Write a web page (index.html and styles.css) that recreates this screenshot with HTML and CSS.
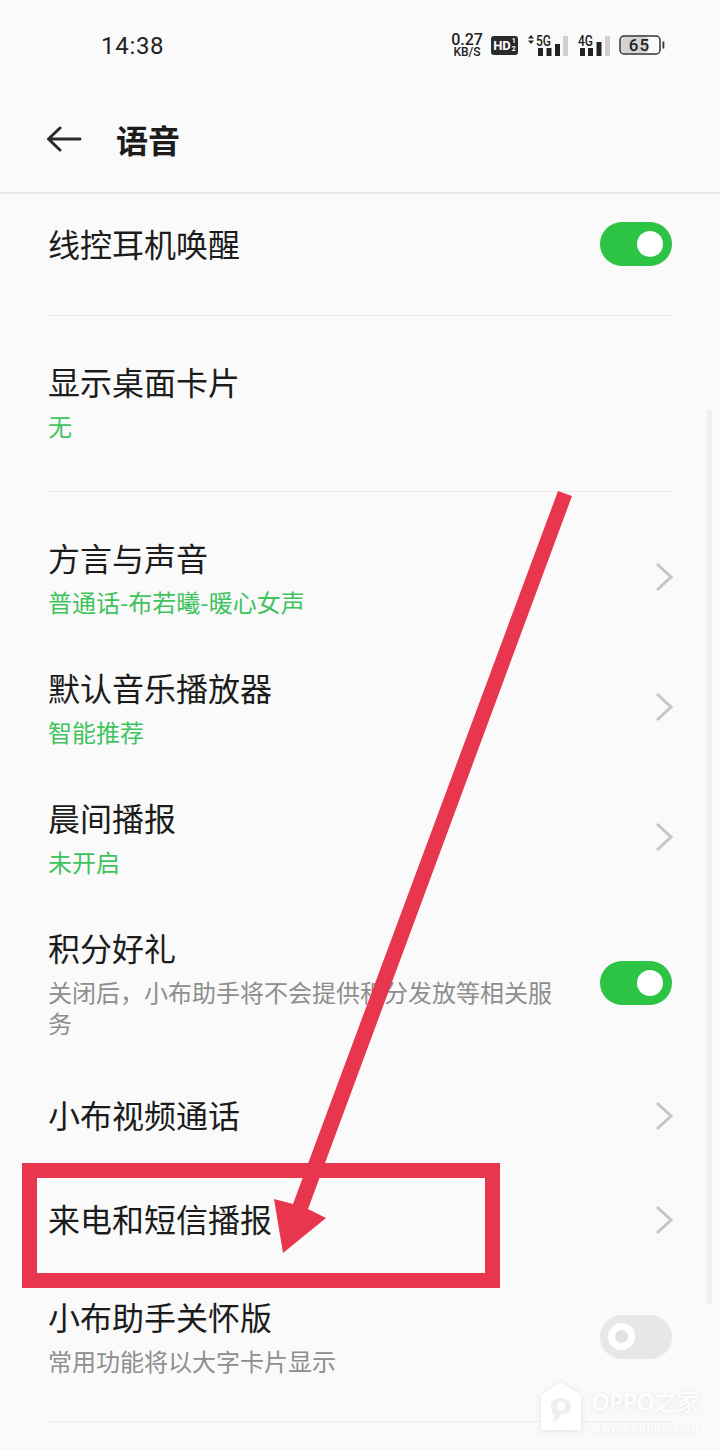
FILE: index.html
```html
<!DOCTYPE html>
<html lang="zh-CN">
<head>
<meta charset="utf-8">
<title>语音</title>
<link rel="stylesheet" href="styles.css">
</head>
<body>
<div class="screen">
  <div class="status">
    <span class="time">14:38</span>
    <div class="status-icons">
      <div class="speed"><span class="speed-num">0.27</span><span class="speed-unit">KB/S</span></div>
      <div class="hd"><span class="hd-text">HD</span><span class="hd-frac"><span>1</span><span>2</span></span></div>
      <svg class="sig5" width="42" height="24" viewBox="0 0 42 24">
        <path d="M4 2 7 5.500H1ZM4 11 1 7.500H7Z" fill="#222"/>
        <text x="9" y="13" class="sig-label" textLength="15" lengthAdjust="spacingAndGlyphs">5G</text>
        <rect x="11" y="15" width="5" height="8" fill="#222"/><rect x="19.500" y="15" width="5" height="8" fill="#222"/><rect x="28" y="11" width="5" height="12" fill="#222"/><rect x="36" y="3" width="5" height="20" fill="#cfcfcf"/>
      </svg>
      <svg class="sig4" width="32" height="24" viewBox="0 0 32 24">
        <text x="0" y="13" class="sig-label" textLength="15" lengthAdjust="spacingAndGlyphs">4G</text>
        <rect x="2" y="15" width="5" height="8" fill="#222"/><rect x="10" y="15" width="5" height="8" fill="#222"/><rect x="18.500" y="9" width="5" height="14" fill="#222"/><rect x="27" y="3" width="5" height="20" fill="#cfcfcf"/>
      </svg>
      <svg class="batt" width="46" height="20" viewBox="0 0 46 20">
        <rect x="2" y="2" width="27" height="16" rx="3" fill="#d4d4d4"/>
        <rect x="1" y="1" width="40" height="18" rx="4" fill="none" stroke="#333" stroke-width="1.500"/>
        <rect x="43.500" y="6.500" width="1.800" height="7" fill="#333"/>
        <text x="20.500" y="16" text-anchor="middle" class="batt-text">65</text>
      </svg>
    </div>
  </div>
  <header class="head">
    <svg class="back" width="36" height="26" viewBox="0 0 36 26"><path d="M34 13H3M14 2 2.500 13 14 24" fill="none" stroke="#2a2a2a" stroke-width="3" stroke-linecap="round" stroke-linejoin="round"/></svg>
    <h1 class="head-title">语音</h1>
  </header>

  <main class="list">
    <div class="row row-first divider">
      <div class="title">线控耳机唤醒</div>
      <span class="switch on"></span>
    </div>
    <div class="row row-second divider">
      <div><div class="title">显示桌面卡片</div><div class="sub green">无</div></div>
    </div>
    <div class="row row-sub row-after-rule">
      <div><div class="title">方言与声音</div><div class="sub green">普通话-布若曦-暖心女声</div></div>
      <svg class="chev" width="18" height="30" viewBox="0 0 18 30"><path d="M2 2 16 15 2 28" fill="none" stroke="#c6c6c6" stroke-width="3"/></svg>
    </div>
    <div class="row row-sub">
      <div><div class="title">默认音乐播放器</div><div class="sub green">智能推荐</div></div>
      <svg class="chev" width="18" height="30" viewBox="0 0 18 30"><path d="M2 2 16 15 2 28" fill="none" stroke="#c6c6c6" stroke-width="3"/></svg>
    </div>
    <div class="row row-sub">
      <div><div class="title">晨间播报</div><div class="sub green">未开启</div></div>
      <svg class="chev" width="18" height="30" viewBox="0 0 18 30"><path d="M2 2 16 15 2 28" fill="none" stroke="#c6c6c6" stroke-width="3"/></svg>
    </div>
    <div class="row row-sub">
      <div class="text-wrap"><div class="title">积分好礼</div><div class="sub grey">关闭后，小布助手将不会提供积分发放等相关服务</div></div>
      <span class="switch on"></span>
    </div>
    <div class="row row-plain">
      <div class="title">小布视频通话</div>
      <svg class="chev" width="18" height="30" viewBox="0 0 18 30"><path d="M2 2 16 15 2 28" fill="none" stroke="#c6c6c6" stroke-width="3"/></svg>
    </div>
    <div class="row row-plain">
      <div class="title">来电和短信播报</div>
      <svg class="chev" width="18" height="30" viewBox="0 0 18 30"><path d="M2 2 16 15 2 28" fill="none" stroke="#c6c6c6" stroke-width="3"/></svg>
    </div>
    <div class="row row-sub row-last divider">
      <div><div class="title">小布助手关怀版</div><div class="sub grey">常用功能将以大字卡片显示</div></div>
      <span class="switch off"></span>
    </div>
  </main>

  <div class="scrollbar"></div>

  <div class="watermark">
    <svg class="wm-logo" width="42" height="48" viewBox="0 0 42 48">
      <path d="M21 0 41 13V46a2 2 0 0 1-2 2H3a2 2 0 0 1-2-2V13Z" fill="#fff"/>
      <path d="M12 40C17 36 12 31 11 26 10 19 15 16 21 16 27 16 31 20 31 25 31 30 26 33 21 32 20 36 17 39 12 40Z" fill="#efefef"/>
      <ellipse cx="21" cy="24" rx="4" ry="5" fill="#fff"/>
    </svg>
    <div class="wm-text"><span class="wm-name">OPPO之家</span><span class="wm-url">www.oppojia.com</span></div>
  </div>

  <div class="redbox"></div>
  <svg class="arrow" width="720" height="1450" viewBox="0 0 720 1450">
    <path d="M558 491 572 496 308 1209 326 1218 283 1253 274 1199 293 1204Z" fill="#e8364e"/>
  </svg>
</div>
</body>
</html>
```
FILE: styles.css
```css
* { box-sizing: border-box; }
html, body { margin: 0; padding: 0; }
body {
  width: 720px;
  height: 1450px;
  overflow: hidden;
  background: #fafafa;
  font-family: "Noto Sans CJK SC", "Noto Sans", sans-serif;
  color: #1c1c1c;
}
.screen { position: relative; width: 720px; height: 1450px; overflow: hidden; }

.status {
  height: 90px;
  display: flex;
  align-items: center;
  justify-content: space-between;
  padding: 2px 55px 0 101px;
}
.time {
  font-family: Roboto, sans-serif;
  font-size: 24px;
  letter-spacing: 0.700px;
  color: #222;
}
.status-icons { display: flex; align-items: center; margin-top: -2px; }
.speed {
  display: flex;
  flex-direction: column;
  align-items: center;
  width: 34px;
  font-family: Roboto, sans-serif;
  color: #222;
  font-weight: 500;
  margin-right: 7px;
}
.speed-num { font-size: 16px; line-height: 14px; }
.speed-unit { font-size: 12px; line-height: 11px; }
.hd {
  display: flex;
  align-items: center;
  justify-content: center;
  width: 27px;
  height: 19px;
  background: #2a2a2a;
  border-radius: 3px;
  color: #fff;
  font-family: Roboto, sans-serif;
  font-weight: 700;
  margin-right: 9px;
}
.hd-text { font-size: 13px; line-height: 19px; }
.hd-frac { display: flex; flex-direction: column; font-size: 7px; line-height: 8px; margin-left: 1px; }
.sig5 { margin-right: 9px; }
.sig4 { margin-right: 9px; }
.sig-label { font-family: Roboto, sans-serif; font-size: 15px; font-weight: 500; fill: #222; }
.batt-text { font-family: Roboto, sans-serif; font-size: 17px; font-weight: 500; letter-spacing: 1px; fill: #222; }

.head {
  height: 104px;
  display: flex;
  align-items: center;
  padding: 0 0 4px 46px;
  border-bottom: 2px solid #e7e7e7;
}
.back { margin-right: 34px; }
.head-title { margin: 0; font-size: 32px; line-height: 44px; font-weight: 700; color: #1c1c1c; }

.list { display: flex; flex-direction: column; }
.row {
  display: flex;
  align-items: center;
  justify-content: space-between;
  margin: 0 48px;
}
.divider { border-bottom: 1px solid #ebebeb; }
.row-first { padding: 29px 0 48px; }
.row-second { padding: 45px 0 48px; }
.row-sub { padding: 24px 0; }
.row-after-rule { margin-top: 21px; }
.row-plain { padding: 30px 0; }
.row-last { padding-bottom: 43px; }
.title { font-size: 32px; line-height: 40px; padding-bottom: 4px; color: #1c1c1c; }
.sub { font-size: 24px; line-height: 31px; margin: 5px 0 2px; }
.green { color: #3fc35f; }
.grey { color: #8e8e8e; }
.text-wrap { width: 510px; }
.chev { flex: none; margin-right: -1px; }
.row-sub .chev { margin-top: -2px; }

.switch { position: relative; flex: none; width: 72px; height: 44px; margin-top: -2px; border-radius: 22px; }
.switch.on { background: #2dc446; }
.switch.off { background: #e7e7e7; margin-top: 0; }
.switch::after {
  content: "";
  position: absolute;
  box-sizing: border-box;
  top: 9px;
  width: 26px;
  height: 26px;
  border-radius: 50%;
}
.switch.on::after { right: 9px; background: #fff; }
.switch.off::after { left: 8px; top: 8px; width: 27px; height: 27px; background: #e2e2e2; border: 7px solid #fff; }

.scrollbar {
  position: absolute;
  left: 707px;
  top: 410px;
  width: 5px;
  height: 895px;
  background: #f0f0f0;
  border-radius: 2px;
}

.watermark {
  position: absolute;
  left: 540px;
  top: 1382px;
  display: flex;
  gap: 10px;
  filter: drop-shadow(0 1px 3px rgba(0, 0, 0, 0.1));
}
.wm-text { display: flex; flex-direction: column; color: #fff; }
.wm-name { font-family: "Noto Sans", "Noto Sans CJK SC", sans-serif; font-size: 22.500px; line-height: 30px; margin-top: 5px; white-space: nowrap; }
.wm-url { font-family: Roboto, sans-serif; font-size: 11.500px; line-height: 14px; letter-spacing: 1px; margin-top: 4px; white-space: nowrap; }

.redbox {
  position: absolute;
  left: 22px;
  top: 1163px;
  width: 478px;
  height: 125px;
  border: 15px solid #e8364e;
}
.arrow { position: absolute; left: 0; top: 0; }
```
